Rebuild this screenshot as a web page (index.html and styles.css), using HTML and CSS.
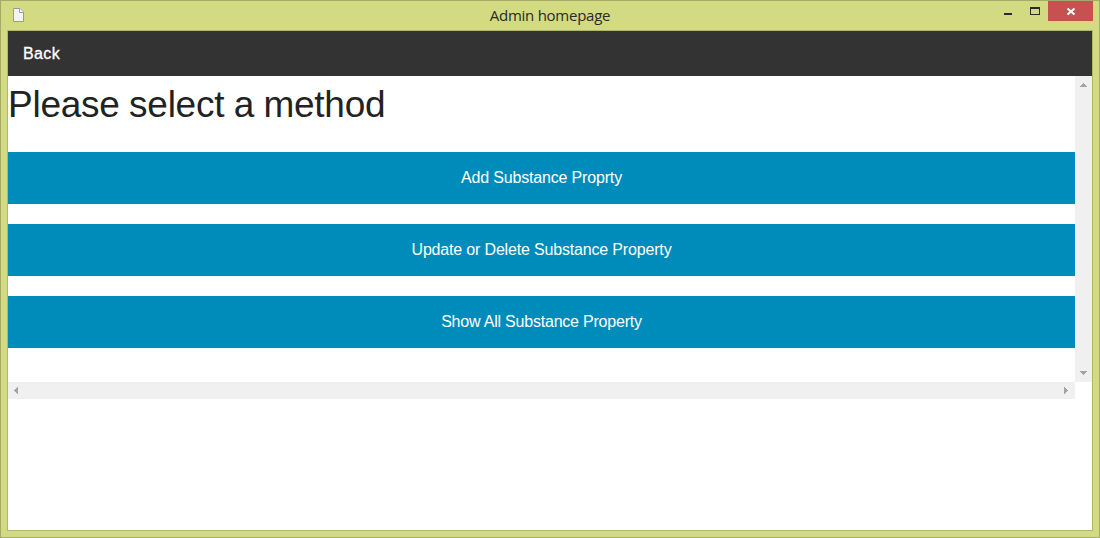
FILE: index.html
```html
<!DOCTYPE html>
<html lang="en">
<head>
<meta charset="utf-8">
<title>Admin homepage</title>
<link rel="stylesheet" href="styles.css">
</head>
<body>
<div class="window">
  <header class="titlebar">
    <svg class="doc-icon" width="11" height="14" viewBox="0 0 11 14">
      <path d="M.5.5H7L10.500 4V13.500H.5Z" fill="#f3f3f3" stroke="#9a9a9a"/>
      <path d="M6.500.5V4.500H10.500" fill="#fff" stroke="#9a9a9a"/>
    </svg>
    <div class="title">Admin homepage</div>
    <div class="controls">
      <svg width="58" height="20" viewBox="0 0 58 20" shape-rendering="crispEdges" fill="#2a2a2a">
        <path d="M14 12h8v2h-8z"/>
        <path fill-rule="evenodd" d="M40 6h10v8H40zM41 8v5h8V8z"/>
      </svg>
      <div class="close">
        <svg width="45" height="20" viewBox="0 0 45 20" fill="none" stroke="#fff" stroke-width="2">
          <path d="M19.500 7.500L26.500 13.500M26.500 7.500L19.500 13.500"/>
        </svg>
      </div>
    </div>
  </header>
  <div class="client">
    <nav class="topbar"><a class="back">Back</a></nav>
    <div class="scroller">
      <main class="content">
        <h2 class="heading">Please select a method</h2>
        <a class="button">Add Substance Proprty</a>
        <a class="button">Update or Delete Substance Property</a>
        <a class="button button-tight">Show All Substance Property</a>
      </main>
      <div class="vbar">
        <svg width="17" height="17" viewBox="0 0 17 17" shape-rendering="crispEdges" fill="#a3a3a3"><path d="M8 7h1v1h1v1h1v1h1v1H5v-1h1V9h1V8h1z"/></svg>
        <svg width="17" height="17" viewBox="0 0 17 17" shape-rendering="crispEdges" fill="#a3a3a3"><path d="M5 6h7v1h-1v1h-1v1H9v1H8V9H7V8H6V7H5z"/></svg>
      </div>
      <div class="hbar">
        <svg width="17" height="17" viewBox="0 0 17 17" shape-rendering="crispEdges" fill="#a3a3a3"><path d="M10 5v7H9v-1H8v-1H7V9H6V8h1V7h1V6h1V5z"/></svg>
        <svg width="17" height="17" viewBox="0 0 17 17" shape-rendering="crispEdges" fill="#a3a3a3"><path d="M6 5v7h1v-1h1v-1h1V9h1V8H9V7H8V6H7V5z"/></svg>
      </div>
    </div>
  </div>
</div>
</body>
</html>
```

FILE: styles.css
```css
* { box-sizing: border-box; }
body { margin: 0; font-family: "Liberation Sans", Arial, sans-serif; }
svg { display: block; }
.window {
  width: 1100px;
  height: 538px;
  display: flex;
  flex-direction: column;
  padding: 0 6px 6px;
  background: #d2da82;
  border: 1px solid #a4ab68;
}
.titlebar {
  height: 29px;
  display: grid;
  grid-template-columns: 1fr auto 1fr;
  align-items: start;
}
.doc-icon { margin: 7px 0 0 6px; }
.title {
  padding-top: 4px;
  font: 15px/20px "Open Sans", sans-serif;
  letter-spacing: -0.25px;
  color: #2b2b22;
}
.controls { display: flex; justify-content: flex-end; }
.close { width: 45px; height: 20px; background: #c75050; }
.client {
  flex: 1;
  background: #fff;
  border: 1px solid #b0b76d;
}
.topbar {
  height: 45px;
  padding-left: 15px;
  background: #333;
  line-height: 45px;
}
.back { font-size: 16px; letter-spacing: 0.4px; color: #fff; -webkit-text-stroke: 0.3px #fff; }
.scroller {
  display: grid;
  grid-template-columns: 1fr 17px;
  grid-template-rows: 306px 17px;
}
.heading {
  margin: 3px 0 21px;
  font-size: 37px;
  font-weight: 400;
  line-height: 52px;
  letter-spacing: -0.25px;
  word-spacing: -0.6px;
  color: #222;
}
.button {
  display: block;
  height: 52px;
  margin-bottom: 20px;
  background: #008cba;
  color: #fff;
  font-size: 16px;
  line-height: 52px;
  text-align: center;
  letter-spacing: -0.17px;
}
.button-tight { letter-spacing: -0.21px; }
.vbar, .hbar {
  display: flex;
  justify-content: space-between;
  background: #f0f0f0;
}
.vbar { flex-direction: column; }
```
